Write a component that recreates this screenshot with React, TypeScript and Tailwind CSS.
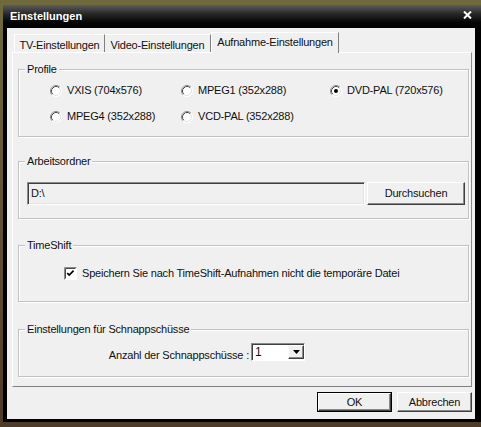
import React from "react";

function Radio({ checked }: { checked?: boolean }) {
  return (
    <svg width="12" height="12" viewBox="0 0 12 12" className="shrink-0">
      <circle cx="6" cy="6" r="5.5" fill="#ffffff" />
      <path d="M9.89 2.11 A5.5 5.5 0 0 0 2.11 9.89" fill="none" stroke="#8a8a8a" strokeWidth="1" />
      <path d="M9.18 2.82 A4.5 4.5 0 0 0 2.82 9.18" fill="none" stroke="#4a4a4a" strokeWidth="1" />
      <path d="M9.89 2.11 A5.5 5.5 0 0 1 2.11 9.89" fill="none" stroke="#ffffff" strokeWidth="1" />
      <path d="M9.18 2.82 A4.5 4.5 0 0 1 2.82 9.18" fill="none" stroke="#e2e2e2" strokeWidth="1" />
      {checked && <circle cx="6" cy="6" r="2" fill="#000000" />}
    </svg>
  );
}

function Checkbox() {
  return (
    <svg width="13" height="13" viewBox="0 0 13 13" className="shrink-0">
      <rect x="0" y="0" width="13" height="13" fill="#ffffff" />
      <path d="M0.5 12.5 V0.5 H12.5" fill="none" stroke="#8a8a8a" />
      <path d="M1.5 11.5 V1.5 H11.5" fill="none" stroke="#4a4a4a" />
      <path d="M3.2 6 L5.2 8.1 L9.6 3.7" fill="none" stroke="#000000" strokeWidth="1.7" />
    </svg>
  );
}

function Group({
  label,
  className,
  children,
}: {
  label: string;
  className: string;
  children?: React.ReactNode;
}) {
  return (
    <div
      className={
        "relative border border-[#c2c2c2] shadow-[inset_1px_1px_0_#ffffff,1px_1px_0_#ffffff] " +
        className
      }
    >
      <span className="absolute top-[-7px] left-[6px] px-[2px] bg-[#f0f0f0] leading-[13px] whitespace-nowrap">
        {label}
      </span>
      {children}
    </div>
  );
}

export default function App() {
  return (
    <div className="w-[481px] h-[427px] overflow-hidden bg-[linear-gradient(180deg,#6f6a3c_0%,#5e4c33_60%,#4e3b28_100%)] pt-[5px] pl-[3px] font-['Liberation_Sans',Arial,sans-serif] text-[11px] leading-[13px] tracking-[-0.2px] text-[#111111]">
      <div className="w-[478px] h-[417px] bg-black flex flex-col">
        {/* Title bar */}
        <div className="h-[23px] shrink-0 flex items-center justify-between pl-[7px] pr-[9px] bg-[linear-gradient(180deg,#5c5c5c_0%,#262626_40%,#050505_75%,#000000_100%)]">
          <span className="text-white font-bold text-[11px] leading-[13px] tracking-normal">Einstellungen</span>
          <svg width="9" height="8" viewBox="0 0 9 8" className="mb-[4px]">
            <path d="M1 0.5 L8 7.5 M8 0.5 L1 7.5" stroke="#ffffff" strokeWidth="2" />
          </svg>
        </div>

        {/* Body */}
        <div className="ml-[4px] mr-[6px] mb-[3px] flex-1 bg-[#f0f0f0] flex flex-col pt-[4px] pl-[5px] pr-[3px]">
          {/* Tabs */}
          <div className="flex items-end h-[20px] pl-[2px]">
            <div className="w-[91px] h-[18px] pt-[4px] text-center border-t border-l border-r border-t-white border-l-white border-r-[#808080] whitespace-nowrap">
              TV-Einstellungen
            </div>
            <div className="w-[106px] h-[18px] pt-[4px] text-center border-t border-r border-t-white border-r-[#808080] whitespace-nowrap">
              Video-Einstellungen
            </div>
            <div className="relative z-10 w-[128px] h-[21px] mb-[-1px] pt-[3px] text-center bg-[#f0f0f0] border-t border-l border-r border-t-white border-l-white border-r-[#808080] whitespace-nowrap">
              Aufnahme-Einstellungen
            </div>
          </div>

          {/* Tab page */}
          <div className="h-[335px] flex flex-col border border-t-white border-l-white border-r-[#8a8a8a] border-b-[#808080] pl-[5px] pr-[2px]">
            <Group label="Profile" className="mt-[16px] h-[68px]">
              <div className="grid grid-cols-[131px_149px_auto] gap-y-[13px] pt-[14px] pl-[31px]">
                <div className="flex items-center gap-[5px] h-[13px]">
                  <Radio />
                  <span>VXIS (704x576)</span>
                </div>
                <div className="flex items-center gap-[5px] h-[13px]">
                  <Radio />
                  <span>MPEG1 (352x288)</span>
                </div>
                <div className="flex items-center gap-[5px] h-[13px]">
                  <Radio checked />
                  <span>DVD-PAL (720x576)</span>
                </div>
                <div className="flex items-center gap-[5px] h-[13px]">
                  <Radio />
                  <span>MPEG4 (352x288)</span>
                </div>
                <div className="flex items-center gap-[5px] h-[13px]">
                  <Radio />
                  <span>VCD-PAL (352x288)</span>
                </div>
              </div>
            </Group>

            <Group label="Arbeitsordner" className="mt-[24px] h-[58px]">
              <div className="flex items-start gap-[2px] pt-[20px] pl-[8px]">
                <div className="w-[338px] h-[23px] flex items-center pl-[3px] bg-[#f0f0f0] border border-t-[#8a8a8a] border-l-[#8a8a8a] border-b-white border-r-white shadow-[inset_1px_1px_0_#404040,inset_-1px_-1px_0_#e4e4e4]">
                  D:\
                </div>
                <div className="w-[98px] h-[23px] flex items-center justify-center bg-[#f0f0f0] border border-t-white border-l-white border-r-[#404040] border-b-[#404040] shadow-[inset_-1px_-1px_0_#8a8a8a]">
                  Durchsuchen
                </div>
              </div>
            </Group>

            <Group label="TimeShift" className="mt-[26px] h-[57px]">
              <div className="flex items-center gap-[5px] h-[13px] mt-[21px] pl-[45px]">
                <Checkbox />
                <span className="whitespace-nowrap">
                  Speichern Sie nach TimeShift-Aufnahmen nicht die temporäre Datei
                </span>
              </div>
            </Group>

            <Group label="Einstellungen für Schnappschüsse" className="mt-[27px] h-[48px]">
              <div className="flex items-start pt-[13px]">
                <div className="w-[232px] pr-[2px] text-right mt-[6px] whitespace-nowrap">
                  Anzahl der Schnappschüsse :
                </div>
                <div className="w-[54px] h-[18px] flex items-stretch bg-white border border-t-[#8a8a8a] border-l-[#8a8a8a] border-b-white border-r-white shadow-[inset_1px_1px_0_#404040] pt-[1px] pl-[1px]">
                  <div className="flex-1 pl-[2px] leading-[14px] text-[12px]">1</div>
                  <div className="w-[16px] h-[14px] flex items-center justify-center bg-[#f0f0f0] border border-t-white border-l-white border-r-[#404040] border-b-[#404040] shadow-[inset_-1px_-1px_0_#8a8a8a]">
                    <svg width="7" height="4" viewBox="0 0 7 4">
                      <path d="M0 0 H7 L3.5 4 Z" fill="#000000" />
                    </svg>
                  </div>
                </div>
              </div>
            </Group>
          </div>

          {/* Buttons */}
          <div className="flex justify-end gap-[5px] mt-[5px]">
            <div className="w-[75px] h-[20px] border border-black">
              <div className="w-full h-full flex items-center justify-center bg-[#f0f0f0] border border-t-white border-l-white border-r-[#404040] border-b-[#404040] shadow-[inset_-1px_-1px_0_#8a8a8a]">
                OK
              </div>
            </div>
            <div className="w-[75px] h-[20px] flex items-center justify-center bg-[#f0f0f0] border border-t-white border-l-white border-r-[#404040] border-b-[#404040] shadow-[inset_-1px_-1px_0_#8a8a8a]">
              Abbrechen
            </div>
          </div>
        </div>
      </div>
    </div>
  );
}
